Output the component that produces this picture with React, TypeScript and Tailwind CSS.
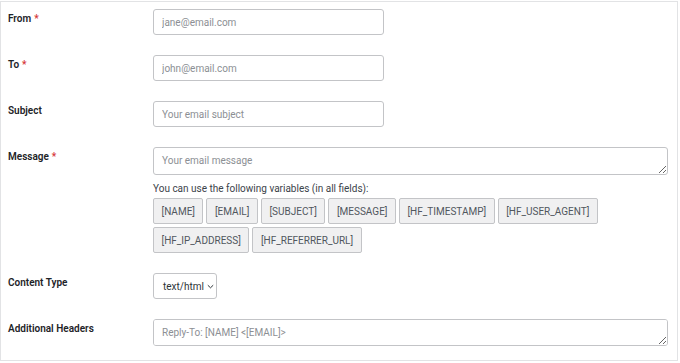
import React from 'react';

const font = { fontFamily: 'Roboto, "Liberation Sans", sans-serif' };

const variables = [
  '[NAME]',
  '[EMAIL]',
  '[SUBJECT]',
  '[MESSAGE]',
  '[HF_TIMESTAMP]',
  '[HF_USER_AGENT]',
  '[HF_IP_ADDRESS]',
  '[HF_REFERRER_URL]',
];

const Label: React.FC<{ text: string; required?: boolean }> = ({ text, required }) => (
  <div className="w-[145px] shrink-0 pt-[3px] text-[10px] leading-[14px] font-semibold text-[#1d2327]">
    {text}
    {required && <span className="ml-[3px] text-[#d63638]">*</span>}
  </div>
);

const inputCls =
  'h-[26px] w-[231px] rounded-[3px] border border-[#c3c4c7] bg-white px-2 text-[10px] text-[#2c3338] outline-none placeholder:text-[#8c8f94]';

const areaCls =
  'block w-[515px] rounded-[3px] border border-[#c3c4c7] bg-white px-2 py-[6px] text-[10px] leading-[14px] text-[#2c3338] outline-none placeholder:text-[#8c8f94]';

export default function App() {
  return (
    <div className="w-[680px] h-[363px] bg-white pt-px" style={font}>
      <div className="w-[678px] h-[360px] border border-[#e2e3e5] bg-white pl-[7px] pt-[7px] flex flex-col gap-5">
        <div className="flex">
          <Label text="From" required />
          <input className={inputCls} placeholder="jane@email.com" />
        </div>
        <div className="flex">
          <Label text="To" required />
          <input className={inputCls} placeholder="john@email.com" />
        </div>
        <div className="flex">
          <Label text="Subject" />
          <input className={inputCls} placeholder="Your email subject" />
        </div>
        <div className="flex">
          <Label text="Message" required />
          <div className="flex flex-col">
            <textarea rows={1} className={`${areaCls} h-[28px]`} placeholder="Your email message" />
            <p className="mt-[7px] text-[10px] leading-[14px] text-[#3c434a]">
              You can use the following variables (in all fields):
            </p>
            <div className="mt-[2px] flex w-[515px] flex-wrap gap-[3px]">
              {variables.map((v) => (
                <button
                  key={v}
                  className="h-[26px] rounded-[2px] border border-[#c3c4c7] bg-[#f0f0f1] px-[7.5px] text-[10px] text-[#50575e]"
                >
                  {v}
                </button>
              ))}
            </div>
          </div>
        </div>
        <div className="flex">
          <Label text="Content Type" />
          <div className="flex h-[26px] w-[64px] items-center gap-[3px] rounded-[3px] border border-[#c3c4c7] bg-white pl-[9px] text-[10px] text-[#2c3338]">
            <span>text/html</span>
            <svg width="7" height="5" viewBox="0 0 7 5" fill="none">
              <path d="M0.8 1.2 L3.5 3.8 L6.2 1.2" stroke="#2c3338" strokeWidth="1" />
            </svg>
          </div>
        </div>
        <div className="flex">
          <Label text="Additional Headers" />
          <textarea rows={1} className={`${areaCls} h-[27px]`} placeholder="Reply-To: [NAME] <[EMAIL]>" />
        </div>
      </div>
    </div>
  );
}
